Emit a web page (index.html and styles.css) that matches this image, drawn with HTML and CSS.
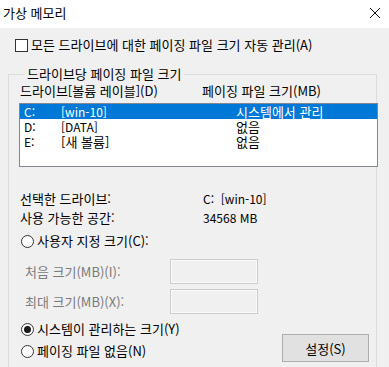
FILE: index.html
```html
<!DOCTYPE html>
<html lang="ko">

<head>
    <meta charset="UTF-8">
    <meta name="viewport" content="width=device-width, initial-scale=1.0">
    <title>가상 메모리</title>
    <link rel="stylesheet" href="styles.css">
</head>

<body>
    <div class="window">
        <div class="titlebar">
            <span class="title">가상 메모리</span>
            <svg class="close" width="12" height="12" viewBox="0 0 12 12">
                <path d="M1 1 L11 11 M11 1 L1 11" stroke="#111" stroke-width="1" fill="none" />
            </svg>
        </div>

        <div class="content">
            <label class="check-row">
                <input type="checkbox" class="check">
                <span>모든 드라이브에 대한 페이징 파일 크기 자동 관리(A)</span>
            </label>

            <fieldset class="group">
                <legend>드라이브당 페이징 파일 크기</legend>

                <div class="list-head">
                    <span class="col-drive">드라이브[볼륨 레이블](D)</span>
                    <span>페이징 파일 크기(MB)</span>
                </div>

                <ul class="drive-list">
                    <li class="selected">
                        <span class="letter latin">C:</span>
                        <span class="volume latin">[win-10]</span>
                        <span>시스템에서 관리</span>
                    </li>
                    <li>
                        <span class="letter latin">D:</span>
                        <span class="volume latin">[DATA]</span>
                        <span>없음</span>
                    </li>
                    <li>
                        <span class="letter latin">E:</span>
                        <span class="volume">[새 볼륨]</span>
                        <span>없음</span>
                    </li>
                </ul>

                <div class="info">
                    <span>선택한 드라이브:</span>
                    <span class="latin">C:&nbsp; [win-10]</span>
                    <span>사용 가능한 공간:</span>
                    <span class="latin">34568 MB</span>
                </div>

                <label class="radio-row">
                    <input type="radio" name="mode" class="radio">
                    <span>사용자 지정 크기(C):</span>
                </label>

                <div class="size-rows">
                    <div class="size-row">
                        <span class="size-label">처음 크기(MB)(I):</span>
                        <input type="text" class="size-input" disabled>
                    </div>
                    <div class="size-row">
                        <span class="size-label">최대 크기(MB)(X):</span>
                        <input type="text" class="size-input" disabled>
                    </div>
                </div>

                <div class="bottom">
                    <div class="bottom-radios">
                        <label class="radio-row">
                            <input type="radio" name="mode" class="radio" checked>
                            <span>시스템이 관리하는 크기(Y)</span>
                        </label>
                        <label class="radio-row">
                            <input type="radio" name="mode" class="radio">
                            <span>페이징 파일 없음(N)</span>
                        </label>
                    </div>
                    <button type="button" class="btn">설정(S)</button>
                </div>
            </fieldset>
        </div>
    </div>
</body>

</html>
```

FILE: styles.css
```css
:root {
    --face: #F0F0F0;
    --group-border: #DCDCDC;
    --list-border: #828790;
    --select: #0078D7;
    --text: #000000;
    --disabled: #7A7A7A;
}

* {
    margin: 0;
    padding: 0;
    box-sizing: border-box;
}

html,
body {
    width: 389px;
    height: 367px;
    overflow: hidden;
}

body {
    font-family: "Noto Sans CJK KR", "Noto Sans", sans-serif;
    font-size: 13px;
    line-height: 16px;
    color: var(--text);
    background-color: var(--face);
}

/* latin-only strings keep the narrower 12px width */
.latin {
    font-size: 12px;
}

.window {
    display: flex;
    flex-direction: column;
    height: 100%;
}

.titlebar {
    height: 28px;
    flex-shrink: 0;
    background-color: #FFFFFF;
    display: flex;
    align-items: center;
    justify-content: space-between;
    padding: 0 8px 2px 3px;
}

.close {
    display: block;
}

.content {
    flex: 1;
    padding: 9px 12px 0 8px;
    display: flex;
    flex-direction: column;
}

.check-row {
    display: flex;
    align-items: center;
    gap: 3px;
    padding-left: 7px;
    height: 16px;
}

.check {
    appearance: none;
    width: 13px;
    height: 13px;
    border: 1px solid #333333;
    background-color: #FFFFFF;
    flex-shrink: 0;
}

.group {
    margin-top: 13px;
    min-width: 0;
    border: 1px solid var(--group-border);
    border-bottom: none;
    padding: 1px 0 0 10px;
    flex: 1;
}

.group legend {
    margin-left: 5px;
    padding: 0 3px;
    line-height: 16px;
}

.list-head {
    display: flex;
    padding-left: 1px;
}

.col-drive {
    width: 182px;
}

.drive-list {
    list-style: none;
    margin-top: 4px;
    margin-right: -2px;
    height: 64px;
    border: 1px solid var(--list-border);
    background-color: #FFFFFF;
}

.drive-list li {
    display: flex;
    align-items: center;
    height: 15px;
    line-height: 15px;
    padding-left: 4px;
}

.drive-list li.selected {
    background-color: var(--select);
    color: #FFFFFF;
}

.letter {
    width: 37px;
}

.volume {
    width: 175px;
}

.info {
    display: grid;
    grid-template-columns: 183px auto;
    align-items: center;
    row-gap: 3px;
    margin-top: 24px;
    padding-left: 1px;
}

.radio-row {
    display: flex;
    align-items: center;
    gap: 3px;
    height: 16px;
    padding-left: 2px;
}

.group > .radio-row {
    margin-top: 7px;
}

.radio {
    appearance: none;
    width: 13px;
    height: 13px;
    border: 1px solid #333333;
    border-radius: 50%;
    background-color: #FFFFFF;
    flex-shrink: 0;
    display: grid;
    place-items: center;
}

.radio:checked::after {
    content: "";
    width: 7px;
    height: 7px;
    border-radius: 50%;
    background-color: #1A1A1A;
}

.size-rows {
    display: flex;
    flex-direction: column;
    gap: 5px;
    margin-top: 10px;
}

.size-row {
    display: flex;
    align-items: center;
}

.size-label {
    width: 151px;
    padding-left: 6px;
    color: var(--disabled);
}

.size-input {
    width: 88px;
    height: 25px;
    border: 1px solid #CCCCCC;
    background-color: var(--face);
    box-shadow: inset 0 0 0 1px #FAFAFA;
}

.bottom {
    display: flex;
    justify-content: space-between;
    align-items: flex-end;
    margin-top: 7px;
    padding-right: 7px;
}

.bottom-radios {
    display: flex;
    flex-direction: column;
    gap: 6px;
    padding-bottom: 3px;
}

.btn {
    width: 87px;
    height: 28px;
    font-family: inherit;
    font-size: 13px;
    color: var(--text);
    background-color: #E1E1E1;
    border: 1px solid #ADADAD;
}
```
